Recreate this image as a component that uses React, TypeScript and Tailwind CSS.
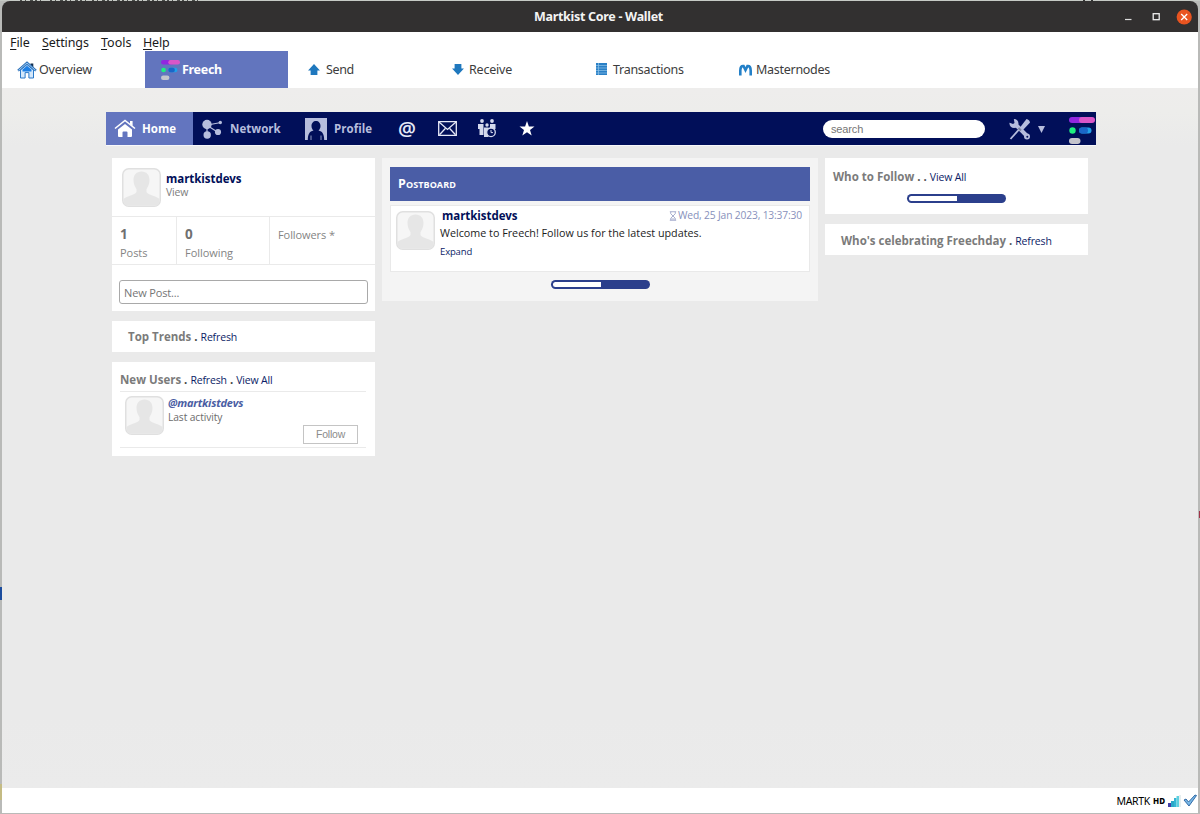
import type { ReactNode } from "react";

const MENUS = [
  { key: "F", rest: "ile", cls: "w-[32px] tracking-[-0.1px]" },
  { key: "S", rest: "ettings", cls: "w-[59px] tracking-[-0.1px]" },
  { key: "T", rest: "ools", cls: "w-[42px] tracking-[0px]" },
  { key: "H", rest: "elp", cls: "w-[40px] tracking-[-0.2px]" },
];

function FreechLogo({ className }: { className: string }) {
  return (
    <svg viewBox="0 0 26 27" className={className} preserveAspectRatio="none">
      <rect x="0" y="0" width="18" height="6" rx="3" fill="#9127e0" />
      <rect x="10" y="0" width="16" height="6" rx="3" fill="#d956c8" />
      <circle cx="3.5" cy="13.5" r="3.2" fill="#1ff080" />
      <rect x="10" y="10.5" width="12.5" height="6" rx="3" fill="#22a0e8" />
      <rect x="10" y="10.5" width="9" height="6" rx="3" fill="#1a66c8" />
      <rect x="0" y="21" width="11.5" height="6" rx="3" fill="#c4c4cc" />
    </svg>
  );
}

function OverviewIcon() {
  return (
    <svg viewBox="0 0 20 18" className="h-[18px] w-[20px]">
      <path d="M13.5 2.5h2.8v5l-2.8-2.4z" fill="#14304f" />
      <path d="M3.5 9v8h4.6v-5.4h3.8V17h4.6V9L10 3.6z" fill="#d4e8fb" stroke="#2a79c9" strokeWidth="1" />
      <path d="M5.5 8.6 10 4.8l4.5 3.8v2H5.5z" fill="#1c7fe6" />
      <path d="M1 9.6 10 1.8l9 7.8" fill="none" stroke="#2a6fb8" strokeWidth="2.2" />
      <path d="M1.4 9.4 10 2l8.6 7.4" fill="none" stroke="#b5dcfb" strokeWidth="0.8" />
    </svg>
  );
}

function Avatar() {
  return (
    <svg viewBox="0 0 39 39" className="size-[39px] shrink-0">
      <rect x="0.75" y="0.75" width="37.5" height="37.5" rx="6" fill="#f6f6f6" stroke="#e0e0e0" strokeWidth="1.5" />
      <path
        d="M19.500 3.500c5 0 8 3.500 8 8.500 0 4-1.500 7-3 9v3c1 3 8.500 3.500 13 7v2.500a4 4 0 0 1-4 4h-28a4 4 0 0 1-4-4V31c4.500-3.500 12-4 13-7v-3c-1.500-2-3-5-3-9 0-5 3-8.500 8-8.500z"
        fill="#e6e6e6"
      />
    </svg>
  );
}

function Loader() {
  return (
    <div className="h-[9px] w-[99px] rounded-full bg-[#2b3f8c] p-[2px]">
      <div className="h-[5px] w-[48px] rounded-l-full bg-white" />
    </div>
  );
}

function Tab({ icon, label, cls }: { icon: ReactNode; label: string; cls: string }) {
  return (
    <div className="flex h-full w-[144px] shrink-0 items-center pl-[19px] text-[12.5px] text-[#3c3c3c]">
      <div className="flex w-[24px] shrink-0 items-center">{icon}</div>
      <span className={cls}>{label}</span>
    </div>
  );
}

function TitleBar() {
  return (
    <div className="flex h-[31px] shrink-0 items-center rounded-t-lg bg-[#323030] text-white">
      <div className="w-[60px]" />
      <div className="flex-1 pl-[17px] pt-[2px] text-center font-['Noto_Sans'] text-[12.5px] font-bold tracking-[-0.3px] text-[#f4f4f4]">
        Martkist Core - Wallet
      </div>
      <svg viewBox="0 0 80 30" className="h-[30px] w-[80px]">
        <path d="M7 17.500h6.500" stroke="#ddd" strokeWidth="1.200" />
        <rect x="35.200" y="11.700" width="6" height="6" fill="none" stroke="#eee" strokeWidth="1.300" />
        <circle cx="66.200" cy="15" r="7.600" fill="#e95420" />
        <path d="m63.200 12 6 6m0-6-6 6" stroke="#fff" strokeWidth="1.300" />
      </svg>
    </div>
  );
}

function NavBar() {
  return (
    <div className="ml-[2px] flex h-[33px] w-[990px] shrink-0 items-center bg-[#010f59] text-[11.5px] font-bold text-[#b6bddd]">
      <div className="flex h-full w-[87px] items-center bg-[#6375bf] pl-[8px] text-white">
        <svg viewBox="0 0 22 19" className="h-[19px] w-[22px]">
          <path d="M1 9.500 11 1.500l10 8" fill="none" stroke="#fff" strokeWidth="1.600" />
          <path d="M16 2h2.600v5L16 5z" fill="#fff" />
          <path d="M4 10.500 11 5l7 5.500V17q0 1-1 1h-3.500v-4.500q0-1-1-1h-3q-1 0-1 1V18H5q-1 0-1-1z" fill="#fff" />
        </svg>
        <span className="ml-[6px] tracking-[0.05px]">Home</span>
      </div>
      <div className="flex w-[112px] items-center pl-[9px]">
        <svg viewBox="0 0 21 20" className="h-[20px] w-[21px]" fill="#b6bddd">
          <path d="M5.500 6 19 3.500M6 7l9.500 6M5 8v9" stroke="#b6bddd" strokeWidth="1.200" />
          <circle cx="5" cy="5.500" r="4.700" />
          <circle cx="18.300" cy="3.500" r="1.700" />
          <circle cx="16" cy="13" r="3.100" />
          <circle cx="5.200" cy="16" r="3.700" />
        </svg>
        <span className="ml-[7px] tracking-[0.05px]">Network</span>
      </div>
      <div className="flex w-[92px] items-center">
        <svg viewBox="0 0 22 22" className="size-[22px]">
          <path d="M0 0h22v22H0z" fill="#b6bddd" />
          <path d="M11 3c2.600 0 4.500 2.100 4.500 5 0 2.100-.8 3.400-2 4.500 4 .8 5.700 3.800 5.700 9.500H2.800c0-5.700 1.700-8.700 5.700-9.500-1.200-1.100-2-2.400-2-4.500 0-2.900 1.900-5 4.500-5z" fill="#010f59" />
          <path d="M6 22v-4.500M16 22v-4.500" stroke="#b6bddd" strokeWidth="0.800" />
        </svg>
        <span className="ml-[7px] tracking-[0.05px]">Profile</span>
      </div>
      <div className="flex items-center text-[#e6e9f7]">
        <span className="w-[40px] pl-[1px] text-[20px] font-semibold leading-[20px]">@</span>
        <svg viewBox="0 0 19 15" className="ml-[1px] h-[15px] w-[19px]" fill="none" stroke="#e6e9f7" strokeWidth="1.300">
          <path d="M.7.7h17.600v13.600H.7z" />
          <path d="m1 1 8.500 7.500L18 1M1.500 13.800l5.800-6.300M17.500 13.800l-5.800-6.300" />
        </svg>
        <svg viewBox="0 0 20 19" className="ml-[20px] h-[19px] w-[20px]" fill="#d4d9ee">
          <circle cx="5" cy="2" r="1.900" />
          <circle cx="15" cy="2" r="1.900" />
          <circle cx="10" cy="6" r="1.700" />
          <path d="M1 5h5.500v11H2.500v-6H1zM13 5h5.500v5H13zM7 8.500h4.500V18H7z" />
          <circle cx="14" cy="13.300" r="4.300" fill="#010f59" stroke="#d4d9ee" strokeWidth="1.300" />
          <path d="M14 11v2.600h2" fill="none" stroke="#d4d9ee" />
        </svg>
        <svg viewBox="0 0 16 15" className="ml-[22px] h-[15px] w-[16px]" fill="#fff">
          <path d="m8 0 1.900 5.400h5.600L11 8.900l1.700 5.600L8 11.200l-4.700 3.300L5 8.900.500 5.400h5.600z" />
        </svg>
      </div>
      <div className="ml-auto h-[18px] w-[162px] rounded-full bg-white pl-[8px] font-['Liberation_Sans'] text-[11px] font-normal leading-[19px] tracking-[-0.15px] text-[#757575]">
        search
      </div>
      <svg viewBox="0 0 22 22" className="ml-[24px] size-[22px]">
        <path d="M1.500 21 10 11.500" stroke="#b6bddd" strokeWidth="1.800" />
        <path d="m11 9.500 6.500-8.500q3 .5 3.500 3.500L14 12z" fill="#b6bddd" />
        <path d="M7 7 18 18" stroke="#b6bddd" strokeWidth="4" />
        <circle cx="18" cy="18.500" r="3" fill="#b6bddd" />
        <circle cx="18.300" cy="18.800" r="1" fill="#010f59" />
        <circle cx="5" cy="5.500" r="4.500" fill="#b6bddd" />
        <path d="M0-1h4.500L5.500 5 4 6-1 4z" fill="#010f59" />
        <path d="m9.500 10 2.500 2.500" stroke="#7f879f" strokeWidth="2" />
      </svg>
      <svg viewBox="0 0 7 7" className="ml-[7px] mt-[2px] h-[7px] w-[7px]">
        <path d="M0 0h7L3.500 7z" fill="#b6bddd" />
      </svg>
      <FreechLogo className="ml-[24px] mr-[1px] mt-[4px] h-[27px] w-[26px]" />
    </div>
  );
}

function Link({ children }: { children: ReactNode }) {
  return <span className="text-[10.5px] font-normal tracking-[-0.15px] text-[#0b1c66]">{children}</span>;
}

function LeftColumn() {
  return (
    <div className="flex w-[263px] flex-col gap-[10px]">
      <div className="h-[153px] bg-white">
        <div className="flex h-[59px] border-b border-[#eaeaea] pl-[10px] pt-[10px]">
          <Avatar />
          <div className="ml-[5px] mt-[3px]">
            <div className="text-[11.5px] font-bold leading-[16px] tracking-[-0.05px] text-[#010f59]">martkistdevs</div>
            <div className="text-[10.5px] leading-[10px] tracking-[-0.2px] text-[#7d7d7d]">View</div>
          </div>
        </div>
        <div className="flex h-[48px] border-b border-[#eaeaea] text-[11px] text-[#848484]">
          <div className="w-[65px] border-r border-[#eaeaea] pl-[8px] pt-[7px]">
            <div className="text-[13.5px] font-bold leading-[20px] text-[#707070]">1</div>
            <div className="leading-[18px] tracking-[-0.05px]">Posts</div>
          </div>
          <div className="w-[93px] border-r border-[#eaeaea] pl-[8px] pt-[7px]">
            <div className="text-[13.5px] font-bold leading-[20px] text-[#707070]">0</div>
            <div className="leading-[18px] tracking-[-0.05px]">Following</div>
          </div>
          <div className="pl-[8px] pt-[9px] leading-[18px] tracking-[-0.08px]">Followers *</div>
        </div>
        <div className="ml-[7px] mt-[15px] h-[24px] w-[249px] rounded-[3px] border border-[#a9a9a9] pl-[4px] text-[11px] leading-[23px] tracking-[-0.15px] text-[#757575]">
          New Post...
        </div>
      </div>

      <div className="h-[31px] bg-white pl-[16px] text-[11.5px] font-bold leading-[32px] text-[#7b7b7b]">
        Top Trends <span className="text-[#444]">.</span> <Link>Refresh</Link>
      </div>

      <div className="h-[94px] bg-white px-[8px] pt-[9px]">
        <div className="h-[21px] w-[246px] border-b border-[#eaeaea] text-[11.5px] font-bold leading-[18px] text-[#7b7b7b]">
          New Users <span className="text-[#444]">.</span> <Link>Refresh</Link> <span className="text-[#444]">.</span>{" "}
          <Link>View All</Link>
        </div>
        <div className="flex h-[56px] w-[246px] border-b border-[#eaeaea] pl-[5px] pt-[4px]">
          <Avatar />
          <div className="ml-[4px] w-[135px]">
            <div className="text-[11px] font-bold italic leading-[14px] tracking-[-0.2px] text-[#4a5da3]">@martkistdevs</div>
            <div className="text-[10.25px] leading-[15px] tracking-[-0.1px] text-[#6c6c6c]">Last activity</div>
          </div>
          <div className="mt-[29px] h-[19px] w-[55px] border border-[#c4c4c4] text-center font-['Liberation_Sans'] text-[10.5px] leading-[17px] tracking-[-0.2px] text-[#8b8b8b]">
            Follow
          </div>
        </div>
      </div>
    </div>
  );
}

function Postboard() {
  return (
    <div className="flex h-[143px] w-[436px] flex-col items-center bg-[#f4f4f4] pt-[9px]">
      <div className="h-[34px] w-[420px] bg-[#4a5da6] pl-[8px] text-[12.5px] font-bold leading-[34px] tracking-[0.08px] text-white [font-variant:small-caps]">
        Postboard
      </div>
      <div className="mt-[4px] flex h-[67px] w-[420px] border border-[#e9e9e9] bg-white pl-[5px] pr-[7px] pt-[5px]">
        <Avatar />
        <div className="-mt-[2px] ml-[5px] flex-1">
          <div className="flex items-center justify-between pl-[2px] leading-[13px]">
            <span className="text-[11.5px] font-bold tracking-[-0.05px] text-[#010f59]">martkistdevs</span>
            <span className="flex items-center text-[10.25px] tracking-[-0.15px] text-[#8790bb]">
              <svg viewBox="0 0 8 11" className="mr-[1px] mt-[1px] h-[10px] w-[8px]" fill="none" stroke="#959dc4" strokeWidth="0.900">
                <path d="M.5.800h7M.5 10.200h7M1.500 1v2L4 5.500 6.500 3V1M1.500 10V8L4 5.500 6.500 8v2M2 8.800h4" />
              </svg>
              Wed, 25 Jan 2023, 13:37:30
            </span>
          </div>
          <div className="mt-[1px] text-[10.75px] leading-[20px] text-[#1c1c1c]">
            Welcome to Freech! Follow us for the latest updates.
          </div>
          <div className="text-[9.5px] leading-[18px] tracking-[-0.15px] text-[#0b1c66]">Expand</div>
        </div>
      </div>
      <div className="mt-[8px]">
        <Loader />
      </div>
    </div>
  );
}

function RightColumn() {
  return (
    <div className="flex w-[263px] flex-col gap-[10px] text-[11.5px] font-bold text-[#7b7b7b]">
      <div className="h-[56px] bg-white pl-[8px] pt-[10px] leading-[17px]">
        Who to Follow <span className="text-[#555]">. .</span> <Link>View All</Link>
        <div className="ml-[74px] mt-[8px]">
          <Loader />
        </div>
      </div>
      <div className="h-[31px] bg-white pl-[16px] leading-[33px]">
        Who&apos;s celebrating Freechday <span className="text-[#555]">.</span> <Link>Refresh</Link>
      </div>
    </div>
  );
}

function StatusBar() {
  return (
    <div className="flex h-[25px] shrink-0 items-center justify-end bg-white pr-[1px] font-['Noto_Sans'] text-black">
      <span className="pt-[2px] text-[10.5px] tracking-[-0.3px]">MARTK</span>
      <span className="ml-[3px] pt-px text-[8px] font-extrabold">HD</span>
      <svg viewBox="0 0 13 12" className="ml-[3px] h-[12px] w-[13px]">
        <path d="M0 8h3v4H0z" fill="#433fa8" />
        <path d="M3 6h3v6H3z" fill="#2ba8c8" />
        <path d="M6 3h2.500v9H6z" fill="#35b5d3" />
        <path d="M8.500 1H11v11H8.500z" fill="#5fd0df" />
        <path d="M11.500 0h1v12h-1z" fill="#ccdde2" />
      </svg>
      <svg viewBox="0 0 14 13" className="ml-[2px] h-[13px] w-[14px]">
        <path d="m1 6 2-1 2.500 3L12 1l1.500.5L6 12z" fill="#79b8e6" stroke="#245f9e" strokeWidth="0.900" />
      </svg>
    </div>
  );
}

export default function App() {
  return (
    <div className="relative h-[814px] w-[1200px] overflow-hidden bg-[#b9bab8] px-[2px] pb-[1px] pt-[1px] font-['Open_Sans','Noto_Sans',sans-serif]">
      <div className="flex h-full flex-col">
        <TitleBar />

        <div className="flex h-[19px] shrink-0 bg-white pl-[8px] font-['Noto_Sans'] text-[12.5px] leading-[21px] text-[#1a1a1a]">
          {MENUS.map((m) => (
            <span key={m.rest} className={m.cls}>
              <span className="underline underline-offset-2">{m.key}</span>
              {m.rest}
            </span>
          ))}
        </div>

        <div className="flex h-[37px] shrink-0 bg-white font-['Noto_Sans']">
          <div className="flex w-[143px] shrink-0 items-center pl-[15px] text-[12.5px] text-[#3c3c3c]">
            <OverviewIcon />
            <span className="ml-[2px] pt-[2px] tracking-[-0.2px]">Overview</span>
          </div>
          <div className="flex w-[143px] shrink-0 items-center bg-[#6275be] pl-[16px] text-[12.5px] font-bold text-white">
            <FreechLogo className="h-[20px] w-[19px]" />
            <span className="ml-[2px] pt-[2px] tracking-[-0.3px]">Freech</span>
          </div>
          <Tab
            label="Send"
            cls="-ml-[5px] pt-[2px] tracking-[-0.35px]"
            icon={
              <svg viewBox="0 0 13 12" className="ml-[1px] h-[11px] w-[12px]">
                <path d="M6.500 0 13 7h-2.800v5H2.800V7H0z" fill="#1f78be" />
              </svg>
            }
          />
          <Tab
            label="Receive"
            cls="-ml-[6px] pt-[2px] tracking-[-0.2px]"
            icon={
              <svg viewBox="0 0 13 12" className="mb-[1px] ml-[1px] h-[11px] w-[12px]">
                <path d="M6.500 12 13 5h-2.800V0H2.800v5H0z" fill="#1f78be" />
              </svg>
            }
          />
          <Tab
            label="Transactions"
            cls="-ml-[6px] pt-[2px] tracking-[-0.28px]"
            icon={
              <svg viewBox="0 0 11 12" className="mb-[1px] ml-[1px] h-[12px] w-[11px]">
                <path d="M0 0h11v12H0z" fill="#2a80c6" />
                <path d="M2.500 0v12M0 2.500h11M0 5h11M0 7.500h11M0 10h11" stroke="#8fc3e8" strokeWidth="0.700" />
              </svg>
            }
          />
          <Tab
            label="Masternodes"
            cls="-ml-[7px] pt-[2px] tracking-[-0.28px]"
            icon={
              <svg viewBox="0 0 13 12" className="h-[12px] w-[13px]" fill="none" stroke="#2380c8" strokeWidth="2.600">
                <path d="M1.300 11.500V6.500Q1.500 1.500 4.500 2l2 4 2-4q3-.500 3.200 4.500v5" />
              </svg>
            }
          />
        </div>

        <div className="flex flex-1 flex-col items-center bg-[linear-gradient(180deg,#eeedec_0px,#ededeb_24px,#eaeaea_58px,#eaeaea_90%,#ebebeb_100%)] pt-[24px]">
          <NavBar />
          <div className="ml-[2px] h-px w-[990px] bg-[#f8f8fb]" />
          <div className="mt-[12px] flex w-[976px] items-start gap-[7px]">
            <LeftColumn />
            <Postboard />
            <RightColumn />
          </div>
        </div>

        <StatusBar />
      </div>

      {/* slivers of the desktop behind the window */}
      <div className="absolute left-0 top-[587px] h-[13px] w-[2px] bg-[#1c4d9e]" />
      <div className="absolute left-0 top-[784px] h-[16px] w-[2px] bg-[#c4bb83]" />
      <div className="absolute right-0 top-[511px] h-[7px] w-px bg-[#a03348]" />
      <div className="absolute left-0 top-0 h-[2px] w-full">
        <svg viewBox="0 0 1200 2" className="h-[2px] w-[1200px]">
          <path d="M0 0h1200v1H0z" fill="#c6cac5" />
          <path d="M20 .5h22M50 .5h38M92 .5h106" stroke="#4a4d4a" strokeDasharray="2 3 1 4 3 2" />
          <path d="M1083 .5h10" stroke="#333" strokeDasharray="2 6" />
        </svg>
      </div>
    </div>
  );
}
